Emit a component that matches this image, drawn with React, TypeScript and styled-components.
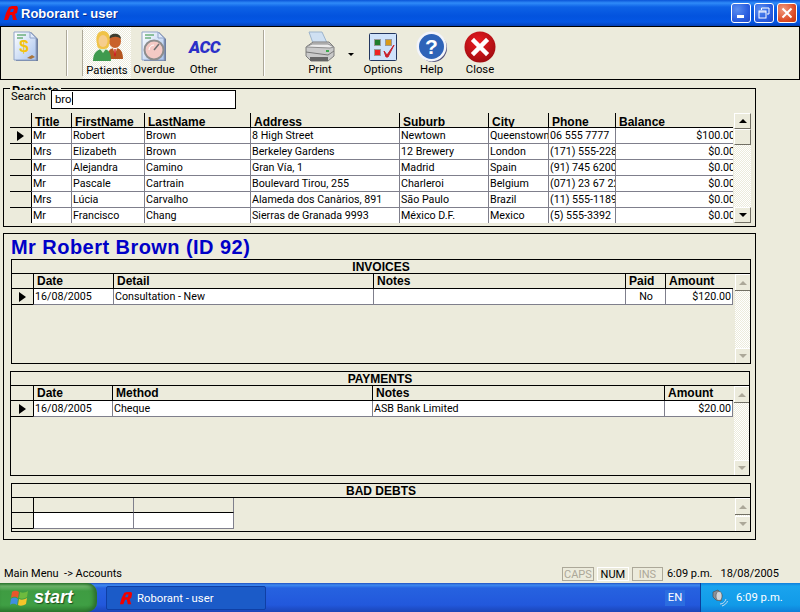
import React from 'react';
import styled, { createGlobalStyle } from 'styled-components';

const FACE = '#ecebdc';
const GRID_LINE = '#7f7f8c';
const BOLD_FONT = '"Liberation Sans", Arial, sans-serif';

const GlobalStyle = createGlobalStyle`
  html, body {
    margin: 0;
    padding: 0;
    background: ${FACE};
  }
  body {
    font-family: Roboto, "Liberation Sans", Arial, sans-serif;
    font-size: 11.3px;
    color: #000;
    overflow: hidden;
  }
`;

const Logo = ({ size }: { size: number }) => (
  <svg width={size} height={size} viewBox="0 0 16 16">
    <path
      fill="#f00000"
      fillRule="evenodd"
      d="M1 15 L3 8 L6 2 L9 1 L14 1 L15 3 L14 8 L12 9 L14 15 L10 15 L9 10 L7 10 L5 15 Z M8 4 L7 7 L10 7 L11 4 Z"
    />
  </svg>
);

const DocBase = ({ children }: { children: React.ReactNode }) => (
  <svg width="26" height="32" viewBox="0 0 26 32">
    <defs>
      <linearGradient id="docFill" x1="0" y1="0" x2="1" y2="1">
        <stop offset="0" stopColor="#ffffff" />
        <stop offset="1" stopColor="#a9c4ee" />
      </linearGradient>
    </defs>
    <path d="M3 1 H18 L25 8 V30 H3 Z" fill="#6f7f9f" />
    <path d="M1 1 H17 L23 7 V29 H1 Z" fill="url(#docFill)" stroke="#8fa3c8" />
    <path d="M17 1 V7 H23 Z" fill="#dfe9fa" stroke="#8fa3c8" />
    <path d="M4 4 H13 M4 7 H10" stroke="#2f8f3f" strokeWidth="1" />
    {children}
  </svg>
);

const DollarIcon = () => (
  <DocBase>
    <text x="11" y="21" fontFamily="Liberation Sans" fontWeight="700" fontSize="17" fill="#f4c20d" textAnchor="middle">$</text>
    <path d="M14 27 L19 24 L22 26 L18 28 Z" fill="#a9743a" />
  </DocBase>
);

const OverdueIcon = () => (
  <DocBase>
    <circle cx="13" cy="19" r="9.5" fill="#f4c9c4" stroke="#8d8d8d" strokeWidth="2" />
    <path d="M13 19 L18 13" stroke="#707070" strokeWidth="1.5" />
    <path d="M8 19 A5 5 0 0 1 13 14" stroke="#fff" strokeWidth="1" fill="none" />
  </DocBase>
);

const PatientsIcon = () => (
  <svg width="33" height="33" viewBox="0 0 33 33">
    <ellipse cx="24" cy="11" rx="6" ry="7" fill="#c9622b" />
    <path d="M18 9 C18 2 30 2 30 9 C27 6 22 6 18 9 Z" fill="#3d3d2f" />
    <path d="M16 29 C16 20 20 18 24 18 C29 18 32 21 32 29 Z" fill="#b4551f" />
    <path d="M22 18 L26 18 L24 25 Z" fill="#fff" />
    <path d="M23.4 19 H24.6 L25 25 L24 27 L23 25 Z" fill="#d02020" />
    <path d="M6 14 C4 6 7 1 12 1 C18 1 20 7 18 14 C18 18 16 19 12 19 C8 19 6 18 6 14 Z" fill="#f0c348" />
    <ellipse cx="12" cy="11" rx="4.5" ry="6" fill="#f6cd8d" />
    <path d="M2 31 C2 22 7 19 12 19 C18 19 20 23 20 31 Z" fill="#3f9a4e" />
    <path d="M9 19 L12 23 L15 19 Z" fill="#d6efcf" />
  </svg>
);

const PrinterIcon = () => (
  <svg width="32" height="32" viewBox="0 0 32 32">
    <path d="M5 1 L18 1 L24 14 L10 15 Z" fill="#cfe0f2" stroke="#9db4cc" />
    <path d="M2 16 L9 11 H25 L30 16 V25 L24 30 H7 L2 25 Z" fill="#c9c9c9" stroke="#7d7d7d" />
    <path d="M2 16 L26 17 L30 16 L24 13 H8 Z" fill="#ececec" stroke="#8f8f8f" />
    <path d="M2 21 L24 24 L30 20" stroke="#777" fill="none" />
    <path d="M6 26 H24 V30 H6 Z" fill="#666" />
    <rect x="22" y="19" width="3" height="2" fill="#3caa4c" />
  </svg>
);

const OptionsIcon = () => (
  <svg width="28" height="28" viewBox="0 0 28 28">
    <rect x="0.5" y="0.5" width="27" height="27" rx="1" fill="#cfe3fb" stroke="#22365f" />
    <rect x="5.5" y="6.5" width="6" height="6" fill="#1f7d2e" stroke="#999" />
    <rect x="16.5" y="6.5" width="6" height="6" fill="#d99a1b" stroke="#999" />
    <rect x="5.5" y="16.5" width="6" height="6" fill="#ee2222" stroke="#999" />
    <path d="M15 18 L18 22 L25 12 L19 24 L17 24 Z" fill="#c8202a" stroke="#c8202a" strokeWidth="1" />
  </svg>
);

const HelpIcon = () => (
  <svg width="32" height="32" viewBox="0 0 32 32">
    <circle cx="17" cy="17" r="14" fill="#4f4f7a" />
    <circle cx="15.5" cy="15.5" r="15" fill="#f2f4fb" />
    <circle cx="15.5" cy="15.5" r="12.5" fill="#2e63b8" />
    <text x="15.5" y="23" fontFamily="Liberation Sans" fontWeight="700" fontSize="21" fill="#fff" textAnchor="middle">?</text>
  </svg>
);

const CloseIcon = () => (
  <svg width="32" height="32" viewBox="0 0 32 32">
    <defs>
      <radialGradient id="closeFill" cx="0.45" cy="0.35" r="0.7">
        <stop offset="0" stopColor="#ee1c22" />
        <stop offset="1" stopColor="#9c0b0f" />
      </radialGradient>
    </defs>
    <circle cx="16" cy="16" r="15.5" fill="url(#closeFill)" />
    <path d="M10 10 L22 22 M22 10 L10 22" stroke="#fff" strokeWidth="4.5" strokeLinecap="square" />
  </svg>
);

const FlagIcon = () => (
  <svg width="19" height="18" viewBox="0 0 19 18">
    <path d="M2 3 C5 1 7 2 9 3 L8 9 C6 8 4 7 1 9 Z" fill="#e8562c" />
    <path d="M10 3 C12 4 15 4 18 2 L17 8 C14 10 11 10 9 9 Z" fill="#6dbb3e" />
    <path d="M1 10 C4 8 6 9 8 10 L7 16 C5 15 3 14 0 16 Z" fill="#3f8fe0" />
    <path d="M9 10 C11 11 14 11 17 9 L16 15 C13 17 10 17 8 16 Z" fill="#f4c52a" />
  </svg>
);

const SpeakerIcon = () => (
  <svg width="16" height="18" viewBox="0 0 16 18">
    <path d="M1 3 L6 1 L10 6 L9 12 L4 11 L1 8 Z" fill="#8c9098" stroke="#444" strokeWidth="0.6" />
    <ellipse cx="7" cy="7" rx="3" ry="4.5" fill="#d2d4d8" stroke="#555" strokeWidth="0.6" />
    <path d="M8 15 C11 15 13 13 14 10 M10 17 C13 16 15 14 15.5 12" stroke="#c4d8f0" fill="none" />
  </svg>
);

const Screen = styled.div`
  display: flex;
  flex-direction: column;
  width: 800px;
  height: 612px;
  overflow: hidden;
`;

const Main = styled.div`
  display: flex;
  flex-direction: column;
  height: 583px;
  background: ${FACE};
`;

const TitleBar = styled.div`
  display: flex;
  align-items: center;
  height: 26px;
  padding: 0 3px;
  box-sizing: border-box;
  background: linear-gradient(to bottom, #0a54d8 0, #2f8bf8 3px, #0d62e6 7px, #0353de 16px, #0456e4 22px, #0340b8 26px);
`;

const TitleText = styled.span`
  margin-left: 2px;
  flex: 1;
  font-family: ${BOLD_FONT};
  font-size: 13px;
  font-weight: 700;
  color: #fff;
  text-shadow: 1px 1px 0 #0a2f90;
`;

const CaptionButton = styled.span<{ $danger?: boolean }>`
  display: flex;
  align-items: center;
  justify-content: center;
  width: 20px;
  height: 20px;
  box-sizing: border-box;
  margin-left: 3px;
  border: 1px solid #fff;
  border-radius: 3px;
  background: ${p => (p.$danger
    ? 'radial-gradient(circle at 30% 30%, #f09a7e, #dd4a24 65%, #c2370f)'
    : 'radial-gradient(circle at 30% 30%, #5b8ef0, #2a5ee0 60%, #2248c4)')};
`;

const Toolbar = styled.div`
  display: flex;
  height: 54px;
  box-sizing: border-box;
  border: 1px solid #000;
  background: ${FACE};
`;

const ToolSeparator = styled.div<{ $left: number }>`
  width: 1px;
  height: 46px;
  margin: 3px 0 0 ${p => p.$left}px;
  background: #aca899;
  box-shadow: 1px 0 0 #fff;
`;

const ToolButton = styled.div<{ $width: number; $pressed?: boolean; $left?: number }>`
  display: flex;
  flex-direction: column;
  align-items: center;
  width: ${p => p.$width}px;
  margin-left: ${p => p.$left ?? 0}px;
  padding-top: 3px;
  box-sizing: border-box;
  ${p => p.$pressed && `
    background: repeating-conic-gradient(#ffffff 0 25%, ${FACE} 0 50%) 0 0 / 2px 2px;
  `}
`;

const ToolIcon = styled.div`
  display: flex;
  align-items: center;
  justify-content: center;
  height: 33px;
`;

const ToolLabel = styled.span<{ $low?: boolean }>`
  margin-top: ${p => (p.$low ? 1 : 0)}px;
  line-height: 14px;
  white-space: nowrap;
`;

const AccMark = styled.span`
  padding-left: 2px;
  font-size: 17px;
  font-weight: 900;
  font-style: italic;
  letter-spacing: -0.6px;
  color: #2b2fc8;
`;

const DropArrow = styled.span`
  width: 0;
  height: 0;
  margin: 26px 4px 0 4px;
  border-left: 3px solid transparent;
  border-right: 3px solid transparent;
  border-top: 3px solid #000;
`;

const PatientsBox = styled.div`
  position: relative;
  width: 753px;
  height: 139px;
  margin: 8px 0 0 3px;
  padding: 1px 4px 0 6px;
  box-sizing: border-box;
  border: 1px solid #000;
`;

const GroupLegend = styled.span`
  position: absolute;
  top: -5px;
  left: 6px;
  height: 6px;
  padding: 0 2px;
  overflow: hidden;
  font-family: ${BOLD_FONT};
  font-size: 12px;
  line-height: 14px;
  font-weight: 700;
  background: ${FACE};
`;

const SearchRow = styled.div`
  display: flex;
  height: 23px;
`;

const SearchLabel = styled.span`
  width: 41px;
  padding-left: 1px;
  box-sizing: border-box;
  line-height: 14px;
`;

const SearchInput = styled.div`
  width: 185px;
  height: 19px;
  padding-left: 3px;
  box-sizing: border-box;
  border: 1px solid #000;
  background: #fff;
  line-height: 18px;
`;

const Caret = styled.span`
  display: inline-block;
  width: 1px;
  height: 13px;
  vertical-align: -2px;
  background: #000;
`;

const GridWrap = styled.div<{ $fill?: boolean }>`
  display: flex;
  ${p => p.$fill && 'flex: 1;'}
`;

const Table = styled.div`
  display: flex;
  flex-direction: column;
`;

const Row = styled.div<{ $cols: number[] }>`
  display: grid;
  grid-template-columns: ${p => p.$cols.map(c => `${c}px`).join(' ')};
`;

const Indicator = styled.div<{ $head?: boolean; $last?: boolean }>`
  display: flex;
  align-items: center;
  justify-content: center;
  height: ${p => (p.$head ? 14 : 15)}px;
  border-bottom: ${p => (p.$last ? 'none' : '1px solid #000')};
`;

const RowArrow = styled.span`
  width: 0;
  height: 0;
  border-top: 5px solid transparent;
  border-bottom: 5px solid transparent;
  border-left: 7px solid #000;
`;

const HeadCell = styled.div<{ $quiet?: boolean; $low?: boolean; $closed?: boolean }>`
  height: 14px;
  padding-left: 3px;
  overflow: hidden;
  white-space: nowrap;
  border-left: 1px solid ${p => (p.$quiet ? GRID_LINE : '#000')};
  border-right: ${p => (p.$closed ? `1px solid ${GRID_LINE}` : 'none')};
  border-bottom: 1px solid #000;
  font-family: ${BOLD_FONT};
  font-size: 12px;
  font-weight: 700;
  line-height: ${p => (p.$low ? 18 : 15)}px;
`;

const Cell = styled.div<{ $right?: boolean; $first?: boolean; $closed?: boolean; $last?: boolean; $center?: boolean }>`
  height: 15px;
  padding: 0 ${p => (p.$closed ? 1 : 0)}px 0 1px;
  overflow: hidden;
  white-space: nowrap;
  background: #fff;
  border-left: 1px solid ${p => (p.$first ? '#000' : GRID_LINE)};
  border-right: ${p => (p.$closed ? `1px solid ${GRID_LINE}` : 'none')};
  border-bottom: ${p => (p.$last ? 'none' : `1px solid ${GRID_LINE}`)};
  font-size: 10.7px;
  line-height: 15px;
  text-align: ${p => (p.$right ? 'right' : p.$center ? 'center' : 'left')};
`;

const ClippedAmount = styled.span`
  display: inline-block;
  margin-right: -2px;
`;

const ScrollColumn = styled.div<{ $width: number }>`
  display: flex;
  flex-direction: column;
  width: ${p => p.$width}px;
  margin-left: auto;
`;

const ScrollButton = styled.div<{ $enabled?: boolean; $height?: number }>`
  display: flex;
  flex: none;
  align-items: center;
  justify-content: center;
  height: ${p => p.$height ?? 16}px;
  box-sizing: border-box;
  background: ${FACE};
  border-top: 1px solid #fff;
  border-left: 1px solid #fff;
  ${p => p.$enabled && `
    border-right: 1px solid #716f64;
    border-bottom: 1px solid #716f64;
  `}
`;

const Triangle = styled.span<{ $up?: boolean; $enabled?: boolean }>`
  width: 0;
  height: 0;
  border-left: 4px solid transparent;
  border-right: 4px solid transparent;
  ${p => {
    const colour = p.$enabled ? '#000' : '#aca899';
    return p.$up ? `border-bottom: 4px solid ${colour};` : `border-top: 4px solid ${colour};`;
  }}
`;

const ScrollTrack = styled.div`
  flex: 1;
  background: repeating-conic-gradient(#ffffff 0 25%, ${FACE} 0 50%) 0 0 / 2px 2px;
`;

const ScrollThumb = styled.div`
  height: 16px;
  box-sizing: border-box;
  background: ${FACE};
  border-bottom: 1px solid #716f64;
  border-right: 1px solid #716f64;
  border-top: 1px solid #fff;
  border-left: 1px solid #fff;
`;

const DisabledStop = styled.div`
  flex: none;
  height: 1px;
  background: #716f64;
`;

const DetailPanel = styled.div`
  display: flex;
  flex-direction: column;
  width: 753px;
  height: 307px;
  margin: 6px 0 0 3px;
  box-sizing: border-box;
  border: 1px solid #000;
`;

const PatientHeading = styled.h1`
  height: 25px;
  margin: 0 0 0 7px;
  font-family: ${BOLD_FONT};
  font-size: 20px;
  line-height: 26px;
  font-weight: 700;
  letter-spacing: 0.45px;
  color: #0000c8;
`;

const Section = styled.section<{ $left: number; $height: number; $gap?: number }>`
  display: flex;
  flex-direction: column;
  width: 740px;
  height: ${p => p.$height}px;
  margin: ${p => p.$gap ?? 0}px 0 0 ${p => p.$left}px;
  box-sizing: border-box;
  border: 1px solid #000;
`;

const SectionBand = styled.div`
  height: 13px;
  flex: none;
  border-bottom: 1px solid #000;
  text-align: center;
  font-family: ${BOLD_FONT};
  font-size: 12px;
  font-weight: 700;
  line-height: 14px;
`;

const StatusBar = styled.div`
  display: flex;
  align-items: flex-end;
  margin-top: auto;
  height: 16px;
  padding: 0 21px 2px 4px;
  font-size: 11px;
`;

const StatusText = styled.span`
  flex: 1;
  line-height: 15px;
`;

const KeyFlag = styled.span<{ $on?: boolean; $width: number }>`
  width: ${p => p.$width}px;
  height: 14px;
  margin-right: 3px;
  box-sizing: border-box;
  border: 1px solid ${p => (p.$on ? '#fff' : '#aca899')};
  color: ${p => (p.$on ? '#000' : '#aca899')};
  text-align: center;
  line-height: 13px;
`;

const StatusTime = styled.span<{ $left: number }>`
  margin-left: ${p => p.$left}px;
  line-height: 15px;
`;

const Taskbar = styled.div`
  display: flex;
  align-items: stretch;
  height: 29px;
  color: #fff;
  background: linear-gradient(to bottom, #1f4fc0 0, #3e8af0 2px, #2662e0 5px, #2258dc 22px, #1b45b8 29px);
`;

const StartButton = styled.div`
  display: flex;
  align-items: center;
  width: 97px;
  padding-left: 10px;
  box-sizing: border-box;
  border-radius: 0 10px 10px 0;
  background: linear-gradient(to bottom, #2f7f32 0, #6fb56d 3px, #3f9c42 8px, #3f9f44 22px, #2d7d30 29px);
  box-shadow: inset -3px 0 4px #2b6b2b;
`;

const StartLabel = styled.span`
  margin-left: 5px;
  font-family: ${BOLD_FONT};
  font-size: 18px;
  font-weight: 700;
  font-style: italic;
  text-shadow: 1px 1px 1px #1c4f1c;
`;

const TaskButton = styled.div`
  display: flex;
  align-items: center;
  width: 160px;
  height: 24px;
  margin: 3px 0 0 9px;
  padding-left: 12px;
  box-sizing: border-box;
  border: 1px solid #0f3fa5;
  border-radius: 2px;
  background: #1b5bc8;
`;

const TaskLabel = styled.span`
  margin-left: 4px;
`;

const LangFlag = styled.span`
  margin: 7px 0 0 399px;
  width: 20px;
  height: 16px;
  text-align: center;
  line-height: 15px;
  background: #2b6de0;
`;

const Tray = styled.div`
  display: flex;
  align-items: center;
  margin-left: 15px;
  flex: 1;
  padding-left: 11px;
  border-left: 1px solid #0c3d9c;
  background: linear-gradient(to bottom, #0f7fdc 0, #1aa4ee 3px, #119ae8 22px, #0f7fd8 29px);
`;

const TrayTime = styled.span`
  margin-left: 8px;
`;

type Column = { label?: string; width: number };

const patientCols = [21, 40, 73, 106, 149, 89, 60, 67, 118];
const patientHead = ['Title', 'FirstName', 'LastName', 'Address', 'Suburb', 'City', 'Phone', 'Balance'];
const patients = [
  ['Mr', 'Robert', 'Brown', '8 High Street', 'Newtown', 'Queenstown', '06 555 7777', '$100.00'],
  ['Mrs', 'Elizabeth', 'Brown', 'Berkeley Gardens', '12  Brewery', 'London', '(171) 555-2282', '$0.00'],
  ['Mr', 'Alejandra', 'Camino', 'Gran Vía, 1', 'Madrid', 'Spain', '(91) 745 6200', '$0.00'],
  ['Mr', 'Pascale', 'Cartrain', 'Boulevard Tirou, 255', 'Charleroi', 'Belgium', '(071) 23 67 22 20', '$0.00'],
  ['Mrs', 'Lúcia', 'Carvalho', 'Alameda dos Canàrios, 891', 'São Paulo', 'Brazil', '(11) 555-1189', '$0.00'],
  ['Mr', 'Francisco', 'Chang', 'Sierras de Granada 9993', 'México D.F.', 'Mexico', '(5) 555-3392', '$0.00'],
];

const invoiceCols: Column[] = [
  { width: 21 },
  { label: 'Date', width: 80 },
  { label: 'Detail', width: 260 },
  { label: 'Notes', width: 252 },
  { label: 'Paid', width: 40 },
  { label: 'Amount', width: 68 },
];

const paymentCols: Column[] = [
  { width: 22 },
  { label: 'Date', width: 79 },
  { label: 'Method', width: 260 },
  { label: 'Notes', width: 292 },
  { label: 'Amount', width: 69 },
];

const widths = (cols: Column[]) => cols.map(c => c.width);

const DisabledScroll = ({ top, bottom }: { top: number; bottom: number }) => (
  <ScrollColumn $width={15}>
    <ScrollButton $height={top}>
      <Triangle $up />
    </ScrollButton>
    <DisabledStop />
    <ScrollTrack />
    <ScrollButton $height={bottom}>
      <Triangle />
    </ScrollButton>
  </ScrollColumn>
);

const App = () => {
  return (
    <Screen>
      <GlobalStyle />
      <Main>
        <TitleBar>
          <Logo size={16} />
          <TitleText>Roborant - user</TitleText>
          <CaptionButton>
            <svg width="10" height="10" viewBox="0 0 10 10"><rect x="1" y="7" width="7" height="3" fill="#fff" /></svg>
          </CaptionButton>
          <CaptionButton>
            <svg width="12" height="12" viewBox="0 0 12 12" fill="none" stroke="#fff">
              <path d="M3.5 3 V1 H11 V7 H9" />
              <rect x="1" y="4" width="7" height="7" />
              <path d="M1 5 H8" />
            </svg>
          </CaptionButton>
          <CaptionButton $danger>
            <svg width="12" height="12" viewBox="0 0 12 12"><path d="M1.5 1.5 L10.5 10.5 M10.5 1.5 L1.5 10.5" stroke="#fff" strokeWidth="2" /></svg>
          </CaptionButton>
        </TitleBar>

        <Toolbar>
          <ToolButton $width={50}>
            <ToolIcon><DollarIcon /></ToolIcon>
          </ToolButton>
          <ToolSeparator $left={15} />
          <ToolSeparator $left={15} />
          <ToolButton $width={48} $pressed>
            <ToolIcon><PatientsIcon /></ToolIcon>
            <ToolLabel $low>Patients</ToolLabel>
          </ToolButton>
          <ToolButton $width={46}>
            <ToolIcon><OverdueIcon /></ToolIcon>
            <ToolLabel>Overdue</ToolLabel>
          </ToolButton>
          <ToolButton $width={53}>
            <ToolIcon><AccMark>ACC</AccMark></ToolIcon>
            <ToolLabel>Other</ToolLabel>
          </ToolButton>
          <ToolSeparator $left={33} />
          <ToolButton $width={48} $left={32}>
            <ToolIcon><PrinterIcon /></ToolIcon>
            <ToolLabel>Print</ToolLabel>
          </ToolButton>
          <DropArrow />
          <ToolButton $width={50}>
            <ToolIcon><OptionsIcon /></ToolIcon>
            <ToolLabel>Options</ToolLabel>
          </ToolButton>
          <ToolButton $width={47}>
            <ToolIcon><HelpIcon /></ToolIcon>
            <ToolLabel>Help</ToolLabel>
          </ToolButton>
          <ToolButton $width={50}>
            <ToolIcon><CloseIcon /></ToolIcon>
            <ToolLabel>Close</ToolLabel>
          </ToolButton>
        </Toolbar>

        <PatientsBox>
          <GroupLegend>Patients</GroupLegend>
          <SearchRow>
            <SearchLabel>Search</SearchLabel>
            <SearchInput>bro<Caret /></SearchInput>
          </SearchRow>
          <GridWrap>
            <Table>
              <Row $cols={patientCols}>
                <Indicator $head />
                {patientHead.map(h => <HeadCell key={h} $low>{h}</HeadCell>)}
              </Row>
              {patients.map((p, i) => (
                <Row key={p[1]} $cols={patientCols}>
                  <Indicator $last={i === patients.length - 1}>{i === 0 && <RowArrow />}</Indicator>
                  {p.map((v, j) => (
                    <Cell key={j} $first={j === 0} $right={j === 7} $last={i === patients.length - 1}>
                      {j === 7 ? <ClippedAmount>{v}</ClippedAmount> : v}
                    </Cell>
                  ))}
                </Row>
              ))}
            </Table>
            <ScrollColumn $width={17}>
              <ScrollButton $enabled><Triangle $up $enabled /></ScrollButton>
              <ScrollThumb />
              <ScrollTrack />
              <ScrollButton $enabled><Triangle $enabled /></ScrollButton>
            </ScrollColumn>
          </GridWrap>
        </PatientsBox>

        <DetailPanel>
          <PatientHeading>Mr Robert Brown (ID 92)</PatientHeading>

          <Section $left={7} $height={105}>
            <SectionBand>INVOICES</SectionBand>
            <GridWrap $fill>
              <Table>
                <Row $cols={widths(invoiceCols)}>
                  <Indicator $head />
                  {invoiceCols.slice(1).map(c => <HeadCell key={c.label}>{c.label}</HeadCell>)}
                </Row>
                <Row $cols={widths(invoiceCols)}>
                  <Indicator><RowArrow /></Indicator>
                  <Cell $first>16/08/2005</Cell>
                  <Cell>Consultation - New</Cell>
                  <Cell />
                  <Cell $center>No</Cell>
                  <Cell $right $closed>$120.00</Cell>
                </Row>
              </Table>
              <DisabledScroll top={16} bottom={15} />
            </GridWrap>
          </Section>

          <Section $left={6} $height={105} $gap={7}>
            <SectionBand>PAYMENTS</SectionBand>
            <GridWrap $fill>
              <Table>
                <Row $cols={widths(paymentCols)}>
                  <Indicator $head />
                  {paymentCols.slice(1).map(c => <HeadCell key={c.label}>{c.label}</HeadCell>)}
                </Row>
                <Row $cols={widths(paymentCols)}>
                  <Indicator><RowArrow /></Indicator>
                  <Cell $first>16/08/2005</Cell>
                  <Cell>Cheque</Cell>
                  <Cell>ASB Bank Limited</Cell>
                  <Cell $right $closed>$20.00</Cell>
                </Row>
              </Table>
              <DisabledScroll top={16} bottom={15} />
            </GridWrap>
          </Section>

          <Section $left={7} $height={49} $gap={7}>
            <SectionBand>BAD DEBTS</SectionBand>
            <GridWrap $fill>
              <Table>
                <Row $cols={[21, 100, 101]}>
                  <Indicator $head />
                  <HeadCell />
                  <HeadCell $quiet $closed />
                </Row>
                <Row $cols={[21, 100, 101]}>
                  <Indicator />
                  <Cell $first />
                  <Cell $closed />
                </Row>
              </Table>
              <DisabledScroll top={16} bottom={15} />
            </GridWrap>
          </Section>
        </DetailPanel>

        <StatusBar>
          <StatusText>Main Menu&nbsp; -&gt; Accounts</StatusText>
          <KeyFlag $width={32}>CAPS</KeyFlag>
          <KeyFlag $width={32} $on>NUM</KeyFlag>
          <KeyFlag $width={31}>INS</KeyFlag>
          <StatusTime $left={1}>6:09 p.m.</StatusTime>
          <StatusTime $left={8}>18/08/2005</StatusTime>
        </StatusBar>
      </Main>

      <Taskbar>
        <StartButton>
          <FlagIcon />
          <StartLabel>start</StartLabel>
        </StartButton>
        <TaskButton>
          <Logo size={14} />
          <TaskLabel>Roborant - user</TaskLabel>
        </TaskButton>
        <LangFlag>EN</LangFlag>
        <Tray>
          <SpeakerIcon />
          <TrayTime>6:09 p.m.</TrayTime>
        </Tray>
      </Taskbar>
    </Screen>
  );
};

export default App;
